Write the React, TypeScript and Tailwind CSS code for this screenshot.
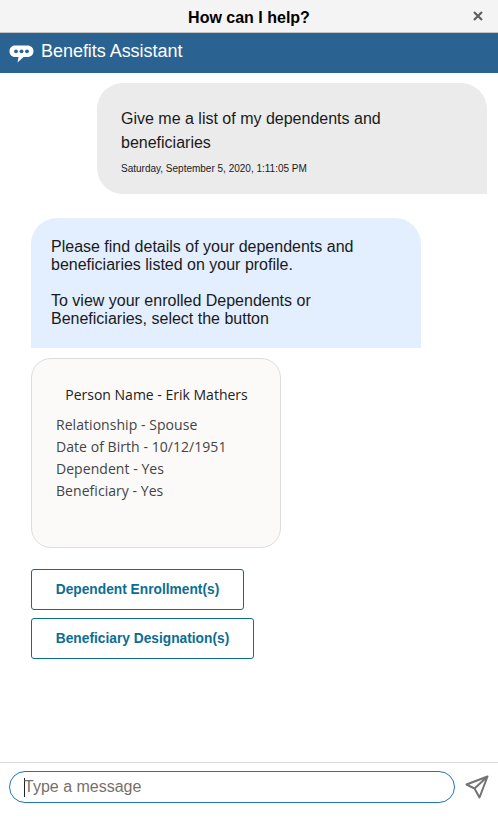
export default function App() {
  return (
    <div className="flex h-[822px] w-[498px] flex-col overflow-hidden bg-white font-['Liberation_Sans',Arial,sans-serif]">
      <div className="relative flex h-[33px] shrink-0 items-center justify-center border-b border-[#c4c4c4] bg-[#f4f4f4] pt-[3px]">
        <span className="text-base leading-none font-bold text-black">How can I help?</span>
        <svg className="absolute top-[11px] right-[15px]" width="10" height="10" viewBox="0 0 10 10">
          <path d="M1 1 L9 9 M9 1 L1 9" stroke="#5f5f5f" strokeWidth="2.2" fill="none" />
        </svg>
      </div>
      <div className="flex h-10 shrink-0 items-center bg-[#2a6291] pb-[4px] pl-[9px]">
        <svg width="25" height="18" viewBox="0 0 25 18" className="mt-[5px]">
          <path d="M6 0.5 H18.5 C22 0.5 24.5 3 24.5 6.2 C24.5 9.5 22 12 18.5 12 H14.5 L8.5 17.5 L9.5 12 H6 C2.8 12 0.5 9.5 0.5 6.2 C0.5 3 2.8 0.5 6 0.5 Z" fill="#ffffff" />
          <circle cx="7" cy="6.3" r="1.9" fill="#2a6291" />
          <circle cx="12.5" cy="6.3" r="1.9" fill="#2a6291" />
          <circle cx="18" cy="6.3" r="1.9" fill="#2a6291" />
        </svg>
        <span className="ml-[7px] text-lg leading-none tracking-[-0.04px] text-white">Benefits Assistant</span>
      </div>
      <div className="flex min-h-0 flex-1 flex-col pt-[10px]">
        <div className="mr-[11px] ml-[97px] h-[111px] rounded-t-[26px] rounded-bl-[26px] bg-[#ebebeb] pt-[24px] pl-[24px] text-[#1a1a1a]">
          <p className="w-[290px] text-base leading-[24px]">Give me a list of my dependents and beneficiaries</p>
          <p className="mt-[8px] text-[10px] leading-[12px]">Saturday, September 5, 2020, 1:11:05 PM</p>
        </div>
        <div className="mt-6 ml-[31px] h-[130px] w-[390px] rounded-t-[26px] bg-[#e3effe] px-[20px] pt-[20px] text-base leading-[18px] text-[#1a1a1a]">
          <p>Please find details of your dependents and beneficiaries listed on your profile.</p>
          <p className="mt-[18px]">To view your enrolled Dependents or Beneficiaries, select the button</p>
        </div>
        <div className="mt-[10px] ml-[31px] h-[190px] w-[250px] rounded-[20px] border border-[#dddddd] bg-[#fbfaf9] pt-[25px] font-['Open_Sans',sans-serif] text-sm leading-[22px]">
          <p className="pl-px text-center text-[#222222]">Person Name - Erik Mathers</p>
          <div className="mt-[8px] ml-[24px] tracking-[0.05px] text-[#444444]">
            <p>Relationship - Spouse</p>
            <p>Date of Birth - 10/12/1951</p>
            <p>Dependent - Yes</p>
            <p>Beneficiary - Yes</p>
          </div>
        </div>
        <div className="mt-[21px] ml-[31px] flex flex-col items-start gap-2">
          <button className="h-[41px] w-[213px] rounded-[3px] border border-[#0c6d93] bg-white pt-px text-[13.75px] font-bold text-[#0c6d93]">Dependent Enrollment(s)</button>
          <button className="h-[41px] w-[223px] rounded-[3px] border border-[#0c6d93] bg-white pt-px text-[13.75px] font-bold text-[#0c6d93]">Beneficiary Designation(s)</button>
        </div>
      </div>
      <div className="flex h-[60px] shrink-0 items-start border-t border-[#dcdcdc] pt-2 pl-[9px]">
        <div className="flex h-[32px] w-[446px] items-center rounded-full border border-[#1f72c4] bg-white pl-[14px]">
          <span className="h-[19px] w-px bg-[#222222]" />
          <span className="-ml-px text-base leading-none text-[#77706a]">Type a message</span>
        </div>
        <svg className="mt-[4px] ml-[10px]" width="24" height="24" viewBox="0 0 24 24" fill="none">
          <path d="M22.5 1.5 L1.5 9.5 L9.5 13.5 L14.5 22.5 Z M22.5 1.5 L9.5 13.5" stroke="#737373" strokeWidth="2" strokeLinejoin="round" />
        </svg>
      </div>
    </div>
  );
}
